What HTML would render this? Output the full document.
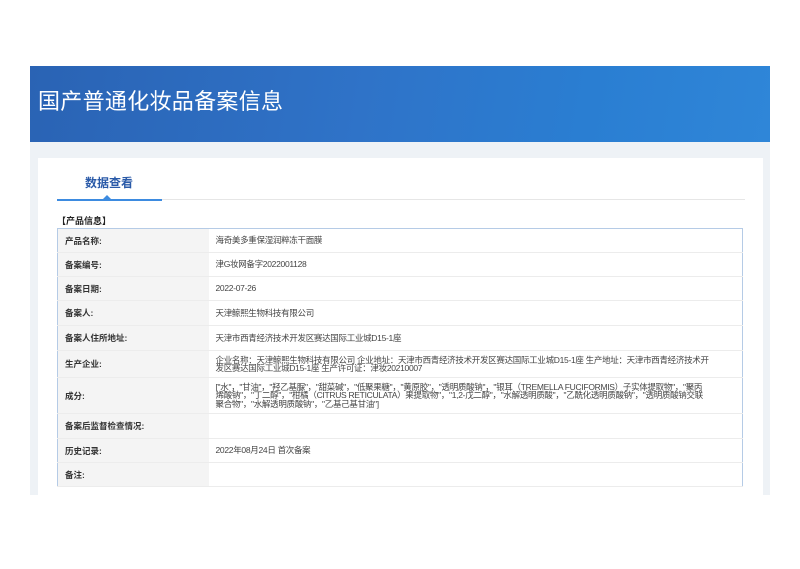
<!DOCTYPE html>
<html><head><meta charset="utf-8"><style>
*{margin:0;padding:0;box-sizing:border-box}
body{width:800px;height:569px;background:#fff;font-family:"Liberation Sans","Noto Sans CJK SC",sans-serif;position:relative;overflow:hidden}
.banner{position:absolute;left:30px;top:66px;width:740px;height:76px;background:linear-gradient(100deg,#2a63b4 0%,#2f73c8 45%,#2a7ed2 75%,#2f86d8 100%);overflow:hidden}
.banner h1{position:absolute;left:8px;top:18px;font-size:22px;font-weight:normal;color:#fff;letter-spacing:0.3px;font-family:"Noto Sans CJK SC",sans-serif}
.gray{position:absolute;left:30px;top:142px;width:740px;height:353px;background:#eef2f6}
.card{position:absolute;left:38px;top:158px;width:725px;height:337px;background:#fff}
.tab{position:absolute;left:85px;top:174px;font-size:12px;font-weight:bold;color:#2a5aa8;font-family:"Noto Sans CJK SC",sans-serif}
.tline{position:absolute;left:57px;top:199px;width:105px;height:2px;background:#3d8be0}
.gline{position:absolute;left:162px;top:199px;width:583px;height:1px;background:#e6e6e6}
.tri{position:absolute;left:103px;top:195px;border:4px solid transparent;border-bottom-color:#3d8be0;border-top:0}
.sec{position:absolute;left:57px;top:214px;font-size:9px;font-weight:bold;color:#222;font-family:"Noto Sans CJK SC",sans-serif}
table{position:absolute;left:57px;top:228px;width:686px;border-collapse:collapse;border:1px solid #b5cbe6;font-size:8.5px;color:#444;font-family:"Liberation Sans","Noto Sans CJK SC",sans-serif;table-layout:fixed}
td{border-bottom:1px solid #ececec;vertical-align:middle;padding:0 7px;white-space:nowrap;overflow:hidden}
td.l{width:151px;background:#f4f4f4;font-weight:bold;color:#333;padding-left:7px}
td.v{line-height:8.5px;letter-spacing:-0.3px}
</style></head><body>
<div class="banner"><h1>国产普通化妆品备案信息</h1></div>
<div class="gray"></div>
<div class="card"></div>
<div class="tab">数据查看</div>
<div class="gline"></div>
<div class="tline"></div>
<div class="tri"></div>
<div class="sec">【产品信息】</div>
<table>
<tr style="height:24px"><td class="l">产品名称:</td><td class="v">海奇美多重保湿润粹冻干面膜</td></tr>
<tr style="height:24px"><td class="l">备案编号:</td><td class="v">津G妆网备字2022001128</td></tr>
<tr style="height:24px"><td class="l">备案日期:</td><td class="v">2022-07-26</td></tr>
<tr style="height:25px"><td class="l">备案人:</td><td class="v">天津鲸熙生物科技有限公司</td></tr>
<tr style="height:25px"><td class="l">备案人住所地址:</td><td class="v">天津市西青经济技术开发区赛达国际工业城D15-1座</td></tr>
<tr style="height:27px"><td class="l">生产企业:</td><td class="v">企业名称：天津鲸熙生物科技有限公司 企业地址：天津市西青经济技术开发区赛达国际工业城D15-1座 生产地址：天津市西青经济技术开<br>发区赛达国际工业城D15-1座 生产许可证：津妆20210007</td></tr>
<tr style="height:36px"><td class="l">成分:</td><td class="v">["水"，"甘油"，"羟乙基脲"，"甜菜碱"，"低聚果糖"，"黄原胶"，"透明质酸钠"，"银耳（TREMELLA FUCIFORMIS）子实体提取物"，"聚丙<br>烯酸钠"，"丁二醇"，"柑橘（CITRUS RETICULATA）果提取物"，"1,2-戊二醇"，"水解透明质酸"，"乙酰化透明质酸钠"，"透明质酸钠交联<br>聚合物"，"水解透明质酸钠"，"乙基己基甘油"]</td></tr>
<tr style="height:25px"><td class="l">备案后监督检查情况:</td><td class="v"></td></tr>
<tr style="height:24px"><td class="l">历史记录:</td><td class="v">2022年08月24日 首次备案</td></tr>
<tr style="height:24px"><td class="l">备注:</td><td class="v"></td></tr>
</table>
</body></html>
